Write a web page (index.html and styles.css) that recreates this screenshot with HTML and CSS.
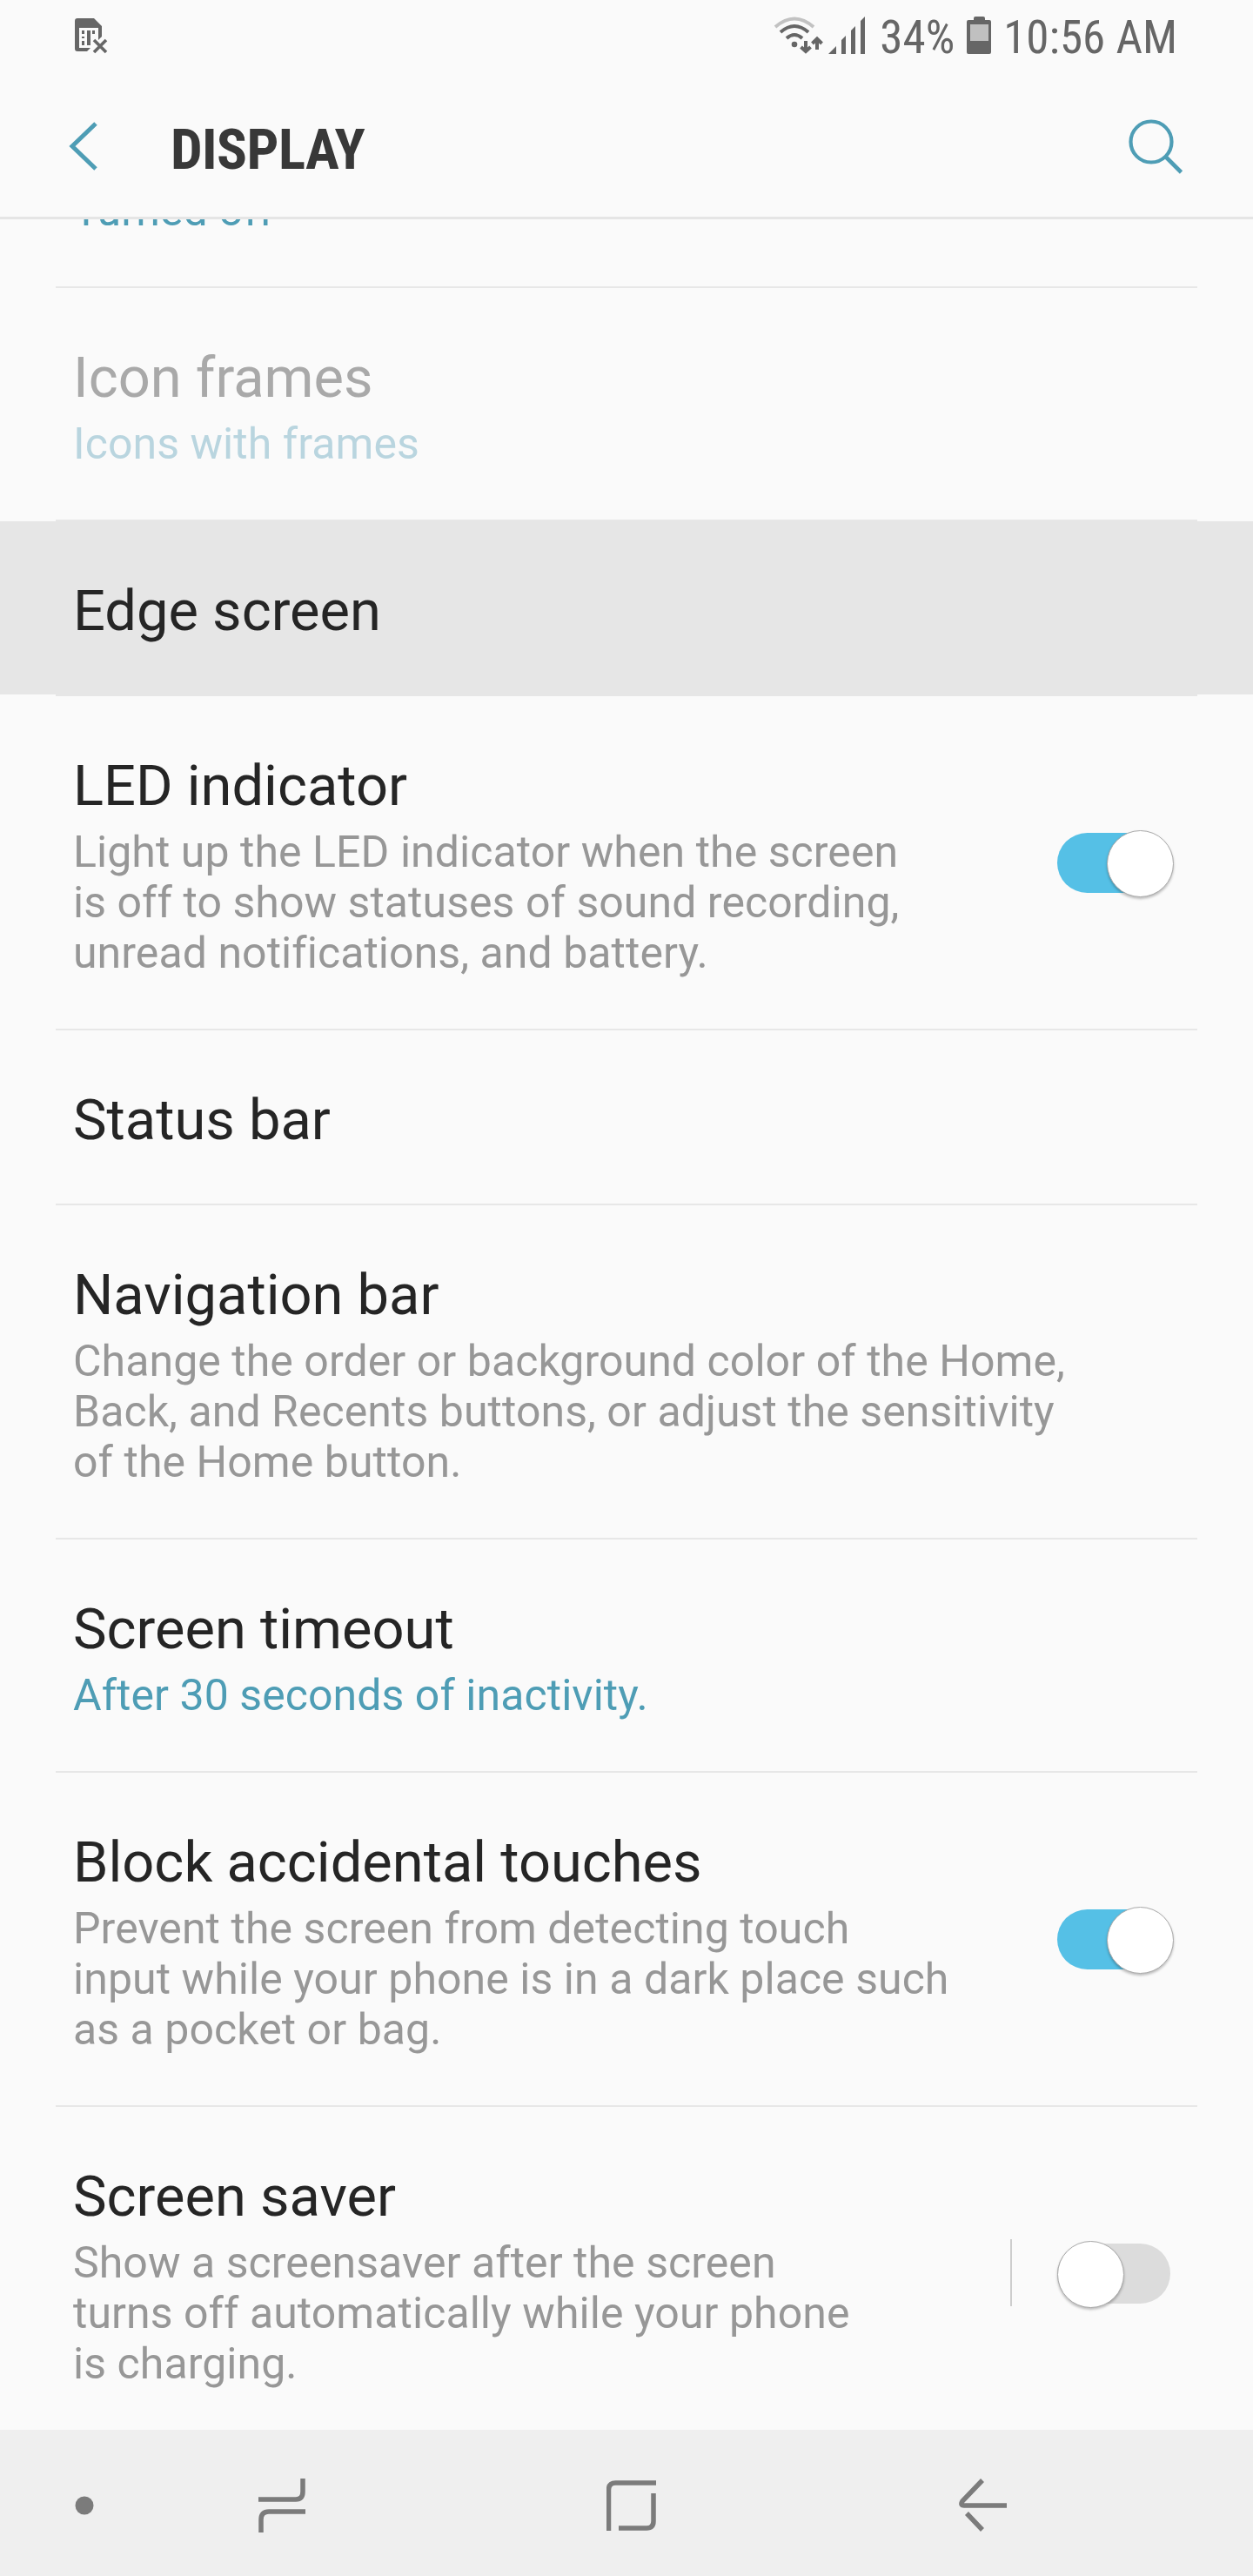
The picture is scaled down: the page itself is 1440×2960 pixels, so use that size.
FILE: index.html
```html
<!DOCTYPE html>
<html lang="en">
<head>
<meta charset="UTF-8">
<title>Display</title>
<link rel="stylesheet" href="styles.css">
</head>
<body>
<div class="status-bar">
    <svg class="sim-icon" width="38" height="42" viewBox="0 0 38 42">
        <path fill="#666" fill-rule="evenodd" d="M3 1H22L31 10V22L27 26V12H5V35H18L14 39H3Q0 39 0 36V4Q0 1 3 1Z"/>
        <path fill="#666" d="M8 15h3v4h-3zM14 15h4v17h-4zM20 15h3v4h-3zM8 22h3v2h-3zM8 27h3v5h-3z"/>
        <path stroke="#666" stroke-width="3.6" d="M22 26L36 40M36 26L22 40"/>
    </svg>
    <div class="status-right">
        <svg class="wifi-icon" width="108" height="44" viewBox="0 0 108 44">
            <g fill="none" stroke="#666" stroke-width="4">
                <path stroke="#c2c2c2" d="M2 12Q24 -7 46 12"/>
                <path d="M8 18Q24 4 40 18"/>
                <path d="M15 25Q24 17 33 25"/>
                <path d="M37 28V40M31.500 35L37 40L42.500 35"/>
                <path d="M50 38V26M44.500 31L50 25.500L55.500 31"/>
            </g>
            <circle cx="24" cy="32" r="3.300" fill="#666"/>
            <path fill="#666" d="M63 43L72 34V43ZM78 43V27L83 22V43ZM89 43V16L94 11V43ZM100 43V5L105 0V43Z"/>
        </svg>
        <span class="percent">34%</span>
        <svg class="battery-icon" width="28" height="43" viewBox="0 0 28 43">
            <path fill="#666" d="M8 2Q8 0 10 0H19Q21 0 21 2V4H26Q28 4 28 6V41Q28 43 26 43H2Q0 43 0 41V6Q0 4 2 4H8Z"/>
            <path fill="#c0c0c0" d="M4 9H25V28H4Z"/>
        </svg>
        <span class="clock">10:56 AM</span>
    </div>
</div>

<div class="header">
    <svg class="back-icon" width="34" height="58" viewBox="0 0 34 58">
        <path fill="none" stroke="#4e9db5" stroke-width="5" d="M31 3L4 29L31 55"/>
    </svg>
    <h1>DISPLAY</h1>
    <svg class="search-icon" width="64" height="64" viewBox="0 0 64 64">
        <circle cx="26" cy="26" r="23.500" fill="none" stroke="#4e9db5" stroke-width="4.200"/>
        <path stroke="#4e9db5" stroke-width="4.600" d="M42.500 43L60.500 61"/>
    </svg>
</div>

<div class="list">
    <div class="row first">
        <p class="value">Turned off</p>
    </div>
    <div class="row disabled">
        <h2>Icon frames</h2>
        <p class="value">Icons with frames</p>
    </div>
    <div class="row pressed">
        <h2>Edge screen</h2>
    </div>
    <div class="row">
        <h2>LED indicator</h2>
        <p>Light up the LED indicator when the screen<br>is off to show statuses of sound recording,<br>unread notifications, and battery.</p>
        <div class="switch on"></div>
    </div>
    <div class="row">
        <h2>Status bar</h2>
    </div>
    <div class="row">
        <h2>Navigation bar</h2>
        <p>Change the order or background color of the Home,<br>Back, and Recents buttons, or adjust the sensitivity<br>of the Home button.</p>
    </div>
    <div class="row">
        <h2>Screen timeout</h2>
        <p class="value">After 30 seconds of inactivity.</p>
    </div>
    <div class="row">
        <h2>Block accidental touches</h2>
        <p>Prevent the screen from detecting touch<br>input while your phone is in a dark place such<br>as a pocket or bag.</p>
        <div class="switch on"></div>
    </div>
    <div class="row last">
        <h2>Screen saver</h2>
        <p>Show a screensaver after the screen<br>turns off automatically while your phone<br>is charging.</p>
        <div class="separator"></div>
        <div class="switch"></div>
    </div>
</div>

<div class="nav-bar">
    <svg class="dot" width="22" height="22" viewBox="0 0 22 22">
        <circle cx="11" cy="11" r="10.500" fill="#7b7b7b"/>
    </svg>
    <svg class="recents" width="54" height="62" viewBox="0 0 54 62">
        <path d="M0 24H43Q51 24 51 15V0M54 38H12Q3 38 3 47V62"/>
    </svg>
    <svg class="home" width="57" height="58" viewBox="0 0 57 58">
        <path d="M2.500 58V11Q2.500 3 10.500 3H57M54 15V47Q54 55 46 55H14"/>
    </svg>
    <svg class="back" width="55" height="62" viewBox="0 0 55 62">
        <path d="M27 2L4 26Q1 31 6 31H55M9 40L27 59"/>
    </svg>
</div>
</body>
</html>
```
FILE: styles.css
```css
* {
    box-sizing: border-box;
}
body {
    margin: 0;
    height: 2960px;
    display: flex;
    flex-direction: column;
    overflow: hidden;
    background: #fafafa;
    font-family: Roboto, sans-serif;
    color: #252525;
}
h1, h2, p {
    margin: 0;
    font-weight: 400;
    white-space: nowrap;
}
svg {
    display: block;
    flex: none;
}

/* Status bar */
.status-bar {
    height: 84px;
    display: flex;
    justify-content: space-between;
    align-items: flex-start;
    padding: 0 87px 0 86px;
    color: #666;
}
.sim-icon {
    margin-top: 20px;
}
.status-right {
    display: flex;
    font-family: "Roboto Condensed", Roboto, sans-serif;
    font-stretch: 75%;
    font-size: 53px;
    line-height: 62px;
    padding-top: 12px;
    white-space: nowrap;
}
.wifi-icon {
    margin: 7px 14px 0 0;
}
.battery-icon {
    margin: 7px 14px 0 14px;
}

/* Header */
.header {
    height: 168px;
    display: flex;
    align-items: flex-start;
    border-bottom: 3px solid #e5e5e5;
    padding: 56px 79px 0 79px;
}
.back-icon {
    margin-top: -1px;
}
.header h1 {
    margin: -6px 0 0 83px;
    font-family: "Roboto Condensed", Roboto, sans-serif;
    font-stretch: 75%;
    font-size: 65px;
    line-height: 76px;
    font-weight: 700;
    letter-spacing: -0.6px;
    color: #383838;
}
.search-icon {
    margin: -3px 0 0 auto;
}

/* Settings list, scrolled part of the way down */
.list {
    flex: 1;
    overflow: hidden;
}
.row {
    position: relative;
    padding: 65px 84px 60px;
    background: linear-gradient(#e7e7e7, #e7e7e7) 64px 100% / 1312px 2px no-repeat;
}
.row.first {
    padding-top: 0;
    margin-top: -39px;
}
.row.last {
    background: none;
}
.row h2 {
    font-size: 65px;
    line-height: 76px;
}
.row p {
    font-size: 50px;
    line-height: 58px;
    letter-spacing: 0.06px;
    color: #979797;
}
.row h2 + p {
    margin-top: 9px;
}
.row p.value {
    color: #4e9db5;
}
.disabled h2 {
    color: #a9a9a9;
}
.disabled p.value {
    color: #b9d5df;
}
.pressed {
    background: linear-gradient(#e6e6e6, #e6e6e6) 0 0 / 100% 199px no-repeat,
        linear-gradient(#e6e6e6, #e6e6e6) 64px 100% / 1312px 2px no-repeat;
}

/* Switches sit over the right end of the row */
.switch {
    position: absolute;
    right: 95px;
    top: 50%;
    width: 130px;
    height: 69px;
    margin-top: -35px;
    border-radius: 35px;
    background: #dcdcdc;
}
.switch::after {
    content: "";
    position: absolute;
    left: 0;
    top: -3px;
    width: 75px;
    height: 75px;
    border-radius: 50%;
    border: 1px solid #aaa;
    background: #fff;
    box-shadow: 0 2px 3px rgba(0,0,0,0.25);
}
.switch.on {
    background: #55c0e6;
}
.switch.on::after {
    left: 57px;
}
.separator {
    position: absolute;
    right: 277px;
    top: 50%;
    width: 2px;
    height: 77px;
    margin-top: -40px;
    background: #cdcdcd;
}

/* Navigation bar */
.nav-bar {
    flex: none;
    height: 168px;
    display: flex;
    align-items: center;
    padding: 6px 0 0 86px;
    background: #efefef;
}
.nav-bar path {
    fill: none;
    stroke: #7b7b7b;
    stroke-width: 5.5;
}
.recents {
    margin-left: 189px;
}
.home {
    margin-left: 346px;
}
.back {
    margin-left: 348px;
}
```
